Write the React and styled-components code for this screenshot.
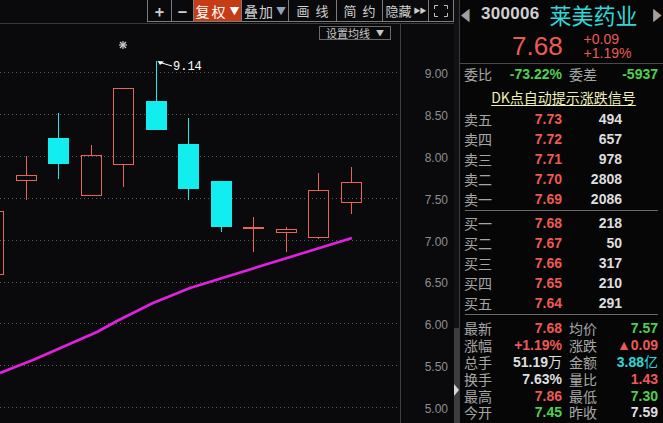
import React from 'react';
import styled, { createGlobalStyle } from 'styled-components';

const Global = createGlobalStyle`
  html, body { margin: 0; padding: 0; background: #0a0a0c; }
  body { font-family: "Liberation Sans", "Noto Sans CJK SC", sans-serif; }
  * { box-sizing: border-box; }
`;

const RED = '#ec5a55';
const GREEN = '#4fd04f';
const CYAN = '#2fd8d8';
const WHITE = '#dedede';
const GRAY = '#a6a6a6';

const Screen = styled.div`
  display: flex;
  width: 663px;
  height: 423px;
  overflow: hidden;
  background: #0a0a0c;
`;

const ChartPane = styled.div`
  width: 454px;
  flex: none;
  display: flex;
  flex-direction: column;
`;

const TopBar = styled.div`
  height: 24px;
  flex: none;
  display: flex;
  justify-content: flex-end;
  align-items: flex-start;
  border-bottom: 1px solid #3a3a3a;
`;

const Toolbar = styled.div`
  display: flex;
  height: 22px;
  border-left: 1px solid #7c7c7c;
  border-bottom: 1px solid #7c7c7c;
`;

const ToolBtn = styled.div`
  width: ${p => p.w}px;
  height: 100%;
  display: flex;
  align-items: center;
  justify-content: center;
  gap: 2px;
  border-right: 1px solid #7c7c7c;
  background: ${p => (p.active ? '#c63c16' : 'transparent')};
  color: ${p => (p.active ? '#ffffff' : '#cfcfcf')};
  font-family: "Noto Sans CJK SC", sans-serif;
  font-size: ${p => p.fs || 13}px;
  font-weight: ${p => (p.bold ? 700 : 400)};
  letter-spacing: ${p => p.ls || 0}px;
  line-height: 1;
  white-space: pre;
`;

const Caret = styled.span`
  font-size: ${p => p.fs || 10}px;
  color: ${p => p.c};
  letter-spacing: ${p => p.ls || 0}px;
`;

const ChartBody = styled.div`
  flex: 1;
  display: flex;
  position: relative;
`;

const Plot = styled.div`
  width: 400px;
  flex: none;
  position: relative;
`;

const MaButton = styled.div`
  position: absolute;
  left: 319px;
  top: 2px;
  width: 72px;
  height: 14px;
  border: 1px solid #6a6a6a;
  display: flex;
  align-items: center;
  justify-content: center;
  gap: 6px;
  font-family: "Noto Sans CJK SC", sans-serif;
  font-size: 11px;
  color: #c8c8c8;
  line-height: 1;
  background: #0a0a0c;
`;

const Axis = styled.div`
  flex: 1;
  border-left: 1px solid #3e3e3e;
  display: flex;
  flex-direction: column;
  padding-top: 30px;
  padding-right: 6px;
`;

const AxisLabel = styled.div`
  height: 41.9px;
  line-height: 41.9px;
  text-align: right;
  font-size: 12px;
  color: #8e8e8e;
  flex: none;
`;

const ScrollStrip = styled.div`
  width: 5px;
  flex: none;
  display: flex;
  flex-direction: column;
  background: #111113;
`;

const ScrollThumb = styled.div`
  margin-top: 328px;
  flex: 1;
  background: #3c3c3e;
  padding-top: 56px;
`;

const ScrollArrow = styled.div`
  width: 0;
  height: 0;
  border-top: 6px solid transparent;
  border-bottom: 6px solid transparent;
  border-left: 5px solid #d8d8d8;
`;

const Panel = styled.div`
  width: 204px;
  flex: none;
  border-left: 1px solid #3a3a3a;
  display: flex;
  flex-direction: column;
  background: #060607;
`;

const Header = styled.div`
  height: 28px;
  flex: none;
  display: grid;
  grid-template-columns: 9px 1fr 9px;
  align-items: center;
  padding: 0 1px 0 1px;
`;

const ArrowGlyph = styled.span`
  display: block;
  font-family: "DejaVu Sans", sans-serif;
  font-size: 11px;
  line-height: 1;
  color: #a0a0a0;
  transform: scaleY(1.6);
`;

const Title = styled.div`
  display: flex;
  align-items: center;
  gap: 10px;
  padding-left: 11px;
  white-space: nowrap;
`;

const Code = styled.div`
  font-size: 17px;
  font-weight: 700;
  color: #cfcfcf;
  letter-spacing: 0.3px;
`;

const Name = styled.div`
  font-family: "Noto Sans CJK SC", sans-serif;
  font-size: 22px;
  line-height: 24px;
  color: ${CYAN};
`;

const PriceRow = styled.div`
  height: 36px;
  flex: none;
  display: flex;
  align-items: center;
  padding-left: 52px;
  border-bottom: 1px solid #4a4a4a;
`;

const BigPrice = styled.div`
  font-size: 26px;
  color: ${RED};
  line-height: 1;
`;

const Change = styled.div`
  margin-left: 21px;
  display: flex;
  flex-direction: column;
  font-size: 14px;
  line-height: 14px;
  color: ${RED};
`;

const Grid4 = styled.div`
  display: grid;
  grid-template-columns: 40px 58px 47px 49px;
  padding: ${p => p.pad || '0'};
  padding-left: 4px;
  grid-auto-rows: ${p => p.rh}px;
  align-items: center;
  flex: none;
`;

const Label = styled.div`
  font-family: "Noto Sans CJK SC", sans-serif;
  font-size: 14px;
  line-height: 1;
  color: ${GRAY};
  padding-left: ${p => p.pl || 0}px;
  white-space: nowrap;
`;

const Num = styled.div`
  text-align: right;
  font-size: 14px;
  font-weight: 700;
  line-height: 1;
  color: ${p => p.c || WHITE};
  white-space: nowrap;
`;

const Unit = styled.span`
  font-family: "Noto Sans CJK SC", sans-serif;
  font-weight: 400;
`;

const DkRow = styled.div`
  height: 25px;
  flex: none;
  display: flex;
  align-items: center;
  justify-content: center;
  padding-left: 4px;
  font-family: "Noto Sans CJK SC", sans-serif;
  font-size: 14px;
  line-height: 1;
  color: #eeeebb;
  text-decoration: underline;
  text-underline-offset: 2px;
`;

const Book = styled.div`
  display: grid;
  grid-template-columns: 40px 58px 60px;
  grid-auto-rows: 20px;
  align-items: center;
  padding: ${p => p.pad};
  padding-left: 4px;
  margin: 0 5px 0 0;
  position: relative;
  flex: none;
  &::after {
    content: '';
    position: absolute;
    left: 5px;
    right: 0;
    bottom: 0;
    border-bottom: 1px solid #6a6a6a;
  }
`;

const GRID_Y = Array.from({ length: 9 }, (_, k) => 48 + 41.9 * k);
const AXIS = ['9.00', '8.50', '8.00', '7.50', '7.00', '6.50', '6.00', '5.50', '5.00'];

const CANDLES = [
  { cx: -6.5, top: 187, bot: 250, hi: 187, lo: 250, up: true },
  { cx: 26.5, top: 151, bot: 156, hi: 132, lo: 176, up: true },
  { cx: 58.5, top: 114, bot: 140, hi: 89, lo: 155, up: false },
  { cx: 91.5, top: 131, bot: 171, hi: 121, lo: 172, up: true },
  { cx: 123.5, top: 64, bot: 140, hi: 64, lo: 163, up: true },
  { cx: 156.5, top: 77, bot: 106, hi: 37, lo: 106, up: false },
  { cx: 188.5, top: 120, bot: 165, hi: 94, lo: 176, up: false },
  { cx: 221.5, top: 157, bot: 203, hi: 157, lo: 208, up: false },
  { cx: 253.5, top: 203, bot: 204, hi: 193, lo: 228, up: true },
  { cx: 286.5, top: 205, bot: 208, hi: 203, lo: 228, up: true },
  { cx: 318.5, top: 166, bot: 213, hi: 149, lo: 215, up: true },
  { cx: 351.5, top: 158, bot: 178, hi: 143, lo: 190, up: true },
];

const MA = '0,349 33,336 97,308 117,297 153,279 190,264 287,234 352,214';

function Candle({ c }) {
  const color = c.up ? '#e8645a' : '#12eef0';
  if (!c.up) {
    return (
      <g>
        <line x1={c.cx} x2={c.cx} y1={c.hi} y2={c.lo} stroke={color} strokeWidth="1" />
        <rect x={c.cx - 10.5} y={c.top} width="21" height={c.bot - c.top} fill={color} />
      </g>
    );
  }
  return (
    <g>
      {c.hi < c.top && <line x1={c.cx} x2={c.cx} y1={c.hi} y2={c.top} stroke={color} />}
      {c.lo > c.bot && <line x1={c.cx} x2={c.cx} y1={c.bot} y2={c.lo} stroke={color} />}
      <rect x={c.cx - 10} y={c.top + 0.5} width="20" height={Math.max(c.bot - c.top, 1)} fill="none" stroke={color} strokeWidth="1" />
    </g>
  );
}

function KChart() {
  return (
    <svg width="400" height="399" viewBox="0 0 400 399" style={{ display: 'block' }}>
      {GRID_Y.map(y => (
        <line key={y} x1="0" x2="400" y1={Math.round(y) + 0.5} y2={Math.round(y) + 0.5}
          stroke="#5c5c5c" strokeWidth="1" strokeDasharray="1 3" />
      ))}
      {CANDLES.map((c, i) => <Candle key={i} c={c} />)}
      <polyline points={MA} fill="none" stroke="#df22df" strokeWidth="2.6" strokeLinejoin="round" />
      <g stroke="#cfcfcf" strokeWidth="1.2">
        <line x1="119" y1="21" x2="127" y2="21" />
        <line x1="123" y1="17" x2="123" y2="25" />
        <line x1="120" y1="18" x2="126" y2="24" />
        <line x1="126" y1="18" x2="120" y2="24" />
      </g>
      <polygon points="157.5,37 164,37.5 160,41" fill="#ffffff" />
      <line x1="160" y1="38.5" x2="172" y2="42" stroke="#ffffff" strokeWidth="1" />
      <text x="173" y="46" fill="#ffffff" fontFamily="Liberation Mono, monospace" fontSize="12">9.14</text>
    </svg>
  );
}

const SELL = [
  ['卖五', '7.73', '494'],
  ['卖四', '7.72', '657'],
  ['卖三', '7.71', '978'],
  ['卖二', '7.70', '2808'],
  ['卖一', '7.69', '2086'],
];

const BUY = [
  ['买一', '7.68', '218'],
  ['买二', '7.67', '50'],
  ['买三', '7.66', '317'],
  ['买四', '7.65', '210'],
  ['买五', '7.64', '291'],
];

const STATS = [
  ['最新', '7.68', RED, '均价', '7.57', GREEN],
  ['涨幅', '+1.19%', RED, '涨跌', '▲0.09', RED],
  ['总手', '51.19万', WHITE, '金额', '3.88亿', CYAN],
  ['换手', '7.63%', WHITE, '量比', '1.43', RED],
  ['最高', '7.86', RED, '最低', '7.30', GREEN],
  ['今开', '7.45', GREEN, '昨收', '7.59', WHITE],
  ['外盘', '24.38万', RED, '内盘', '26.81万', GREEN],
];

function withUnit(v) {
  const m = v.match(/^(.*?)([万亿])$/);
  if (!m) return v;
  return <>{m[1]}<Unit>{m[2]}</Unit></>;
}

export default function App() {
  return (
    <Screen>
      <Global />
      <ChartPane>
        <TopBar>
          <Toolbar>
            <ToolBtn w={24} fs={16} bold>+</ToolBtn>
            <ToolBtn w={22} fs={16} bold>−</ToolBtn>
            <ToolBtn w={48} active fs={14} ls={2}>复权<Caret c="#ffffff">▼</Caret></ToolBtn>
            <ToolBtn w={47} fs={14} ls={1}>叠加<Caret c="#8fa3b8">▼</Caret></ToolBtn>
            <ToolBtn w={48} fs={13}>画  线</ToolBtn>
            <ToolBtn w={46} fs={13}>简  约</ToolBtn>
            <ToolBtn w={46} fs={13}>隐藏<Caret c="#cfcfcf" fs={7} ls={-1}>▶▶</Caret></ToolBtn>
            <ToolBtn w={25}>
              <svg width="14" height="12" viewBox="0 0 14 12">
                <path d="M0.5 4V0.5H4M10 0.5H13.5V4M13.5 8V11.5H10M4 11.5H0.5V8" fill="none" stroke="#bdbdbd" strokeWidth="1" />
              </svg>
            </ToolBtn>
          </Toolbar>
        </TopBar>
        <ChartBody>
          <Plot>
            <KChart />
            <MaButton>设置均线<span style={{ fontSize: 8 }}>▼</span></MaButton>
          </Plot>
          <Axis>
            {AXIS.map(a => <AxisLabel key={a}>{a}</AxisLabel>)}
          </Axis>
        </ChartBody>
      </ChartPane>
      <ScrollStrip>
        <ScrollThumb>
          <ScrollArrow />
        </ScrollThumb>
      </ScrollStrip>
      <Panel>
        <Header>
          <ArrowGlyph>◀</ArrowGlyph>
          <Title>
            <Code>300006</Code>
            <Name>莱美药业</Name>
          </Title>
          <ArrowGlyph>▶</ArrowGlyph>
        </Header>
        <PriceRow>
          <BigPrice>7.68</BigPrice>
          <Change>
            <span>+0.09</span>
            <span>+1.19%</span>
          </Change>
        </PriceRow>
        <Grid4 rh={20}>
          <Label>委比</Label>
          <Num c={GREEN}>-73.22%</Num>
          <Label pl={7}>委差</Label>
          <Num c={GREEN}>-5937</Num>
        </Grid4>
        <DkRow>DK点自动提示涨跌信号</DkRow>
        <Book pad="0 0 2px 0">
          {SELL.map(([l, p, v]) => (
            <React.Fragment key={l}>
              <Label>{l}</Label>
              <Num c={RED}>{p}</Num>
              <Num>{v}</Num>
            </React.Fragment>
          ))}
        </Book>
        <Book pad="2px 0 2px 0">
          {BUY.map(([l, p, v]) => (
            <React.Fragment key={l}>
              <Label>{l}</Label>
              <Num c={RED}>{p}</Num>
              <Num>{v}</Num>
            </React.Fragment>
          ))}
        </Book>
        <Grid4 rh={16.8} pad="5px 0 0 0">
          {STATS.map(([l1, v1, c1, l2, v2, c2]) => (
            <React.Fragment key={l1}>
              <Label>{l1}</Label>
              <Num c={c1}>{withUnit(v1)}</Num>
              <Label pl={7}>{l2}</Label>
              <Num c={c2}>{withUnit(v2)}</Num>
            </React.Fragment>
          ))}
        </Grid4>
      </Panel>
    </Screen>
  );
}
